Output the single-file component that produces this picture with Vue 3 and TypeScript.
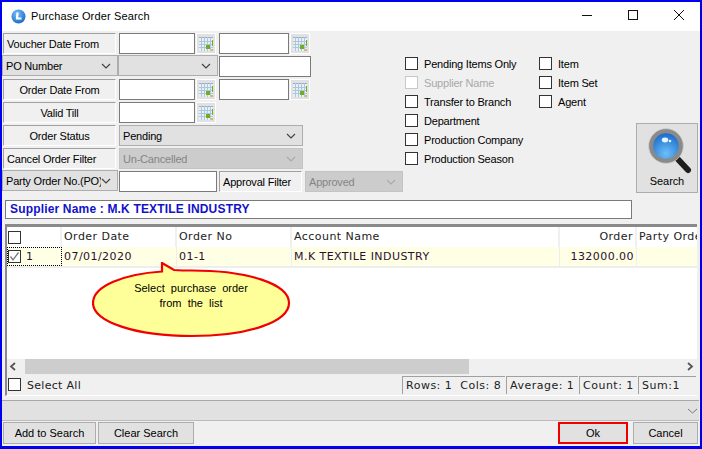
<script setup lang="ts">
const col1 = ['Pending Items Only', 'Supplier Name', 'Transfer to Branch', 'Department', 'Production Company', 'Production Season']
const col2 = ['Item', 'Item Set', 'Agent']
const stats = [
  { text: 'Rows: 1  Cols: 8', w: 103 },
  { text: 'Average: 1', w: 72 },
  { text: 'Count: 1', w: 58 },
  { text: 'Sum:1', w: 58 },
]
</script>

<template>
  <div class="window">
    <header class="titlebar">
      <svg class="app-icon" width="15" height="15" viewBox="0 0 15 15">
        <defs>
          <radialGradient id="ai" cx="0.4" cy="0.3" r="0.8">
            <stop offset="0" stop-color="#7cc0f5" />
            <stop offset="1" stop-color="#0e62c4" />
          </radialGradient>
        </defs>
        <circle cx="7.5" cy="7.5" r="7" fill="url(#ai)" />
        <path d="M6.5 3.5 L6 9.5 L10.5 9.5" fill="none" stroke="#fff" stroke-width="2.2" />
      </svg>
      <span class="title">Purchase Order Search</span>
      <div class="controls">
        <svg width="12" height="12" viewBox="0 0 12 12"><path d="M1 6.5H11" stroke="#111" /></svg>
        <svg width="12" height="12" viewBox="0 0 12 12"><rect x="1.5" y="1.5" width="9" height="9" fill="none" stroke="#111" /></svg>
        <svg width="12" height="12" viewBox="0 0 12 12"><path d="M1 1L11 11M11 1L1 11" stroke="#111" /></svg>
      </div>
    </header>

    <main class="content">
      <section class="top">
        <div class="filters">
          <div class="row">
            <div class="lbl w113 left">Voucher Date From</div>
            <input class="txt w76 ml3" />
            <span class="cal"><svg width="16" height="16" viewBox="0 0 16 16"><rect x="1" y="1" width="14" height="14" fill="#e8eff6" /><path d="M1 1.5H15" stroke="#8fb0cc" /><path d="M1 5.500H15M1 8.500H15M1 11.500H15M3.500 1V15M6.500 1V15M9.500 1V15M12.500 1V15" stroke="#aec6da" /><rect x="8" y="9" width="4" height="4" fill="#6fae1e" /><rect x="14" y="4" width="1" height="6" fill="#6fae1e" /><rect x="13" y="13" width="2" height="2" fill="#eab060" /></svg></span>
            <input class="txt w70 ml3" />
            <span class="cal"><svg width="16" height="16" viewBox="0 0 16 16"><rect x="1" y="1" width="14" height="14" fill="#e8eff6" /><path d="M1 1.5H15" stroke="#8fb0cc" /><path d="M1 5.500H15M1 8.500H15M1 11.500H15M3.500 1V15M6.500 1V15M9.500 1V15M12.500 1V15" stroke="#aec6da" /><rect x="8" y="9" width="4" height="4" fill="#6fae1e" /><rect x="14" y="4" width="1" height="6" fill="#6fae1e" /><rect x="13" y="13" width="2" height="2" fill="#eab060" /></svg></span>
          </div>
          <div class="row tight">
            <div class="sel first"><span>PO Number</span><svg width="10" height="6" viewBox="0 0 10 6"><path d="M1 1L5 5L9 1" fill="none" stroke="#444" stroke-width="1.200" /></svg></div>
            <div class="sel w100"><span></span><svg width="10" height="6" viewBox="0 0 10 6"><path d="M1 1L5 5L9 1" fill="none" stroke="#444" stroke-width="1.200" /></svg></div>
            <input class="txt w92 ml1" />
          </div>
          <div class="row">
            <div class="lbl w113">Order Date From</div>
            <input class="txt w76 ml3" />
            <span class="cal"><svg width="16" height="16" viewBox="0 0 16 16"><rect x="1" y="1" width="14" height="14" fill="#e8eff6" /><path d="M1 1.5H15" stroke="#8fb0cc" /><path d="M1 5.500H15M1 8.500H15M1 11.500H15M3.500 1V15M6.500 1V15M9.500 1V15M12.500 1V15" stroke="#aec6da" /><rect x="8" y="9" width="4" height="4" fill="#6fae1e" /><rect x="14" y="4" width="1" height="6" fill="#6fae1e" /><rect x="13" y="13" width="2" height="2" fill="#eab060" /></svg></span>
            <input class="txt w70 ml3" />
            <span class="cal"><svg width="16" height="16" viewBox="0 0 16 16"><rect x="1" y="1" width="14" height="14" fill="#e8eff6" /><path d="M1 1.5H15" stroke="#8fb0cc" /><path d="M1 5.500H15M1 8.500H15M1 11.500H15M3.500 1V15M6.500 1V15M9.500 1V15M12.500 1V15" stroke="#aec6da" /><rect x="8" y="9" width="4" height="4" fill="#6fae1e" /><rect x="14" y="4" width="1" height="6" fill="#6fae1e" /><rect x="13" y="13" width="2" height="2" fill="#eab060" /></svg></span>
          </div>
          <div class="row">
            <div class="lbl w113">Valid Till</div>
            <input class="txt w76 ml3" />
            <span class="cal"><svg width="16" height="16" viewBox="0 0 16 16"><rect x="1" y="1" width="14" height="14" fill="#e8eff6" /><path d="M1 1.5H15" stroke="#8fb0cc" /><path d="M1 5.500H15M1 8.500H15M1 11.500H15M3.500 1V15M6.500 1V15M9.500 1V15M12.500 1V15" stroke="#aec6da" /><rect x="8" y="9" width="4" height="4" fill="#6fae1e" /><rect x="14" y="4" width="1" height="6" fill="#6fae1e" /><rect x="13" y="13" width="2" height="2" fill="#eab060" /></svg></span>
          </div>
          <div class="row">
            <div class="lbl w113">Order Status</div>
            <div class="sel w184 ml3"><span>Pending</span><svg width="10" height="6" viewBox="0 0 10 6"><path d="M1 1L5 5L9 1" fill="none" stroke="#444" stroke-width="1.200" /></svg></div>
          </div>
          <div class="row">
            <div class="lbl w113 left">Cancel Order Filter</div>
            <div class="sel w184 ml3 off"><span>Un-Cancelled</span><svg width="10" height="6" viewBox="0 0 10 6"><path d="M1 1L5 5L9 1" fill="none" stroke="#aaa" stroke-width="1.200" /></svg></div>
          </div>
          <div class="row">
            <div class="sel first up1"><span class="squeeze">Party Order No.(PO)</span><svg width="10" height="6" viewBox="0 0 10 6"><path d="M1 1L5 5L9 1" fill="none" stroke="#444" stroke-width="1.200" /></svg></div>
            <input class="txt w98 ml1" />
            <div class="lbl w83 ml2 left">Approval Filter</div>
            <div class="sel w98 ml3 off"><span>Approved</span><svg width="10" height="6" viewBox="0 0 10 6"><path d="M1 1L5 5L9 1" fill="none" stroke="#aaa" stroke-width="1.200" /></svg></div>
          </div>
        </div>

        <div class="checks">
          <div class="check-col wide">
            <label v-for="(c, i) in col1" :key="c" class="chk" :class="{ dim: i === 1 }"><i></i>{{ c }}</label>
          </div>
          <div class="check-col">
            <label v-for="c in col2" :key="c" class="chk"><i></i>{{ c }}</label>
          </div>
        </div>

        <button class="search">
          <svg width="46" height="48" viewBox="0 0 46 48">
            <defs>
              <radialGradient id="lens" cx="0.5" cy="0.75" r="0.8">
                <stop offset="0" stop-color="#6cc0fa" />
                <stop offset="1" stop-color="#0b5bc0" />
              </radialGradient>
            </defs>
            <path d="M27 28L41 43" stroke="#1e1e1e" stroke-width="6" stroke-linecap="round" />
            <circle cx="19" cy="19" r="15" fill="url(#lens)" stroke="#8a8a8a" stroke-width="4.500" />
            <circle cx="19" cy="19" r="17.300" fill="none" stroke="#c9c9c9" stroke-width="0.800" />
            <ellipse cx="18" cy="13" rx="3.200" ry="2.400" fill="#e6f5ff" />
            <circle cx="23" cy="14" r="1.300" fill="#e6f5ff" />
          </svg>
          <span>Search</span>
        </button>
      </section>

      <div class="supplier">Supplier Name : M.K TEXTILE INDUSTRY</div>

      <section class="grid">
        <div class="grid-rows">
          <div class="grow head">
            <div class="c c0"><i class="box"></i></div>
            <div class="c c1">Order Date</div>
            <div class="c c2">Order No</div>
            <div class="c c3">Account Name</div>
            <div class="c c4 right">Order</div>
            <div class="c c5">Party Order</div>
          </div>
          <div class="grow data">
            <div class="c c0 focus">
              <i class="box checked"><svg width="11" height="11" viewBox="0 0 11 11"><path d="M1.500 5.500L4 9L9.500 1.500" fill="none" stroke="#777" stroke-width="1.300" /></svg></i>
              <span>1</span>
            </div>
            <div class="c c1">07/01/2020</div>
            <div class="c c2">01-1</div>
            <div class="c c3">M.K TEXTILE INDUSTRY</div>
            <div class="c c4 right">132000.00</div>
            <div class="c c5"></div>
          </div>
          <div class="blank"></div>
        </div>

        <div class="hscroll">
          <svg width="8" height="9" viewBox="0 0 8 9"><path d="M6 1L2 4.500L6 8" fill="none" stroke="#555" stroke-width="1.800" /></svg>
          <div class="track"><div class="thumb"></div></div>
          <svg width="8" height="9" viewBox="0 0 8 9"><path d="M2 1L6 4.500L2 8" fill="none" stroke="#555" stroke-width="1.800" /></svg>
        </div>

        <div class="status">
          <label class="all"><i class="box"></i><span>Select All</span></label>
          <div class="stats">
            <span v-for="s in stats" :key="s.text" class="stat" :style="{ width: s.w + 'px' }">{{ s.text }}</span>
          </div>
        </div>

        <div class="bubble">
          <svg width="200" height="76" viewBox="0 0 200 76">
            <path d="M70 1 L82 8 Q90 8.500 100 8.500 C156 8.500 197 22 197 41 C197 60 156 74 100 74 C44 74 1 60 1 41 C1 24 32 12 70 9.500 Z" fill="#ffff99" stroke="#f00000" stroke-width="2.200" />
          </svg>
          <p>Select&nbsp; purchase&nbsp; order<br />from&nbsp; the&nbsp; list</p>
        </div>
      </section>

      <div class="collapsed">
        <svg width="11" height="6" viewBox="0 0 11 6"><path d="M1 1L5.500 5L10 1" fill="none" stroke="#777" stroke-width="1" /></svg>
      </div>

      <footer class="actions">
        <button class="btn a1">Add to Search</button>
        <button class="btn a2">Clear Search</button>
        <span class="spacer"></span>
        <button class="btn ok">Ok</button>
        <button class="btn cancel">Cancel</button>
      </footer>
    </main>
  </div>
</template>

<style scoped>
.window {
  box-sizing: border-box;
  width: 702px;
  height: 449px;
  border: solid #0000f0;
  border-width: 2px 2px 3px 2px;
  background: #f0f0f0;
  font-family: "Liberation Sans", Arial, sans-serif;
  font-size: 11px;
  letter-spacing: -0.2px;
  color: #000;
  display: flex;
  flex-direction: column;
  overflow: hidden;
}
.titlebar {
  height: 29px;
  background: #fff;
  display: flex;
  align-items: center;
  flex: none;
}
.app-icon { margin-left: 9px; margin-top: -1px; }
.title { margin-left: 5px; margin-top: -1px; letter-spacing: 0.15px; }
.controls {
  margin-left: auto;
  display: flex;
  gap: 34px;
  padding-right: 15px;
  margin-top: -3px;
}
.content { flex: 1; display: flex; flex-direction: column; min-height: 0; }
.top { display: flex; height: 162px; padding-top: 2px; box-sizing: border-box; flex: none; position: relative; }
.filters { width: 403px; padding-left: 1px; display: flex; flex-direction: column; gap: 2px; flex: none; box-sizing: border-box; }
.row { display: flex; height: 21px; align-items: flex-start; }
.row.tight .sel { margin-top: -1px; }
.lbl {
  box-sizing: border-box;
  height: 21px;
  border: solid;
  border-width: 1px;
  border-color: #a0a0a0 #fff #fff #a0a0a0;
  background: #f0f0f0;
  display: flex;
  align-items: center;
  justify-content: center;
  white-space: nowrap;
  overflow: hidden;
}
.lbl.left { justify-content: flex-start; padding-left: 3px; }
.txt {
  box-sizing: border-box;
  height: 21px;
  border: 1px solid #7a7a7a;
  background: #fff;
  padding: 0;
  outline: none;
}
.w113 { width: 113px; }
.w83 { width: 83px; }
.w76 { width: 76px; }
.w70 { width: 70px; }
.w92 { width: 92px; }
.w98 { width: 98px; }
.w100 { width: 100px; }
.w184 { width: 184px; }
input.ml1, .ml1 { margin: 0 0 0 1px; }
.ml2 { margin-left: 2px; }
input.ml3 { margin: 0 0 0 3px; }
.ml3 { margin-left: 3px; }
.cal {
  box-sizing: border-box;
  width: 20px;
  height: 21px;
  background: #e1e1e1;
  border: 1px solid #fff;
  margin-left: 1px;
  display: flex;
  align-items: center;
  justify-content: center;
  flex: none;
}
.sel {
  box-sizing: border-box;
  height: 21px;
  background: #e1e1e1;
  border: 1px solid #adadad;
  display: flex;
  align-items: center;
  justify-content: space-between;
  padding: 0 6px 0 3px;
  white-space: nowrap;
  overflow: hidden;
}
.sel span { overflow: hidden; }
.sel svg { flex: none; }
.sel.first { width: 116px; margin-left: -1px; padding-left: 3px; padding-right: 6px; }
.sel.first span { width: 96px; }
.up1 { margin-top: -1px; }
.off { background: #cccccc; color: #858585; border-color: #c4c4c4; }
.checks { display: flex; padding-top: 24px; margin-left: 0; flex: none; }
.check-col { display: flex; flex-direction: column; gap: 6px; }
.check-col.wide { width: 134px; }
.chk { display: flex; align-items: center; height: 13px; white-space: nowrap; }
.chk i {
  box-sizing: border-box;
  width: 13px;
  height: 13px;
  border: 1px solid #333;
  background: #fff;
  margin-right: 6px;
  flex: none;
}
.chk.dim { color: #a8a8a8; }
.chk.dim i { border-color: #c8c8c8; }
.search {
  position: absolute;
  left: 634px;
  top: 92px;
  box-sizing: border-box;
  width: 62px;
  height: 70px;
  background: #e1e1e1;
  border: 1px solid #adadad;
  font: inherit;
  letter-spacing: -0.1px;
  padding: 3px 0 0 5px;
  display: flex;
  flex-direction: column;
  align-items: center;
}
.search span { margin-top: 0; margin-left: -5px; }
.supplier {
  box-sizing: border-box;
  margin: 7px 0 0 3px;
  width: 627px;
  height: 19px;
  background: #fff;
  border: 1px solid #7a7a7a;
  color: #1212c8;
  font-size: 12px;
  letter-spacing: 0.17px;
  font-weight: bold;
  padding-left: 4px;
  line-height: 17px;
  flex: none;
}
.grid {
  position: relative;
  box-sizing: border-box;
  margin: 5px 3px 0 3px;
  height: 172px;
  border-top: 3px solid #8a8a8a;
  border-left: 2px solid #8a8a8a;
  border-bottom: 1px solid #fff;
  font-family: "DejaVu Sans", Verdana, sans-serif;
  font-size: 11px;
  letter-spacing: 0.45px;
  flex: none;
  display: flex;
  flex-direction: column;
}
.grid-rows { flex: none; height: 132px; background: #fff; display: flex; flex-direction: column; }
.grow { display: flex; height: 20px; flex: none; }
.grow.head { background: #fff; margin-top: 0; }
.grow.data { height: 19px; background: #ffffe6; border-bottom: 2px solid #eeeeee; box-sizing: content-box; }
.blank { flex: 1; }
.c {
  box-sizing: border-box;
  height: 100%;
  display: flex;
  align-items: center;
  padding-left: 2px;
  border-right: 1px solid #eeeeee;
  white-space: nowrap;
  overflow: hidden;
  flex: none;
}
.grow.data .c { color: #2c1030; }
.head .c { color: #222; border-right: 2px solid #f0f0f0; padding-bottom: 2px; }
.c0 { width: 55px; }
.grow .c0 { padding-left: 1px; padding-bottom: 0; }
.c1 { width: 115px; }
.c2 { width: 115px; }
.c3 { width: 268px; }
.c4 { width: 77px; justify-content: flex-end; padding: 0 2px 0 0; }
.c5 { width: 60px; border-right: none; padding-left: 2px; }
.grow .c5 { border-right: none; }
.box {
  box-sizing: border-box;
  display: inline-flex;
  align-items: center;
  justify-content: center;
  width: 13px;
  height: 13px;
  border: 1px solid #333;
  background: #fff;
  flex: none;
}
.focus {
  outline: 1px dotted #000;
  outline-offset: -1px;
  gap: 5px;
  background: #ffffe6;
}
.hscroll {
  flex: none;
  height: 15px;
  display: flex;
  align-items: center;
  padding: 0 3px 0 2px;
  background: #f0f0f0;
}
.track { flex: 1; height: 15px; margin: 0 5px 0 8px; }
.thumb { width: 444px; height: 15px; background: #cdcdcd; }
.status {
  flex: 1;
  display: flex;
  align-items: center;
  justify-content: space-between;
  padding-right: 1px;
}
.all { display: flex; align-items: center; gap: 6px; margin-left: 1px; color: #222; font-size: 11px; letter-spacing: 0.3px; }
.all span { margin-top: 1px; }
.stats { display: flex; height: 18px; gap: 1px; margin-top: 1px; }
.stat {
  box-sizing: border-box;
  border-left: 1px solid #a0a0a0;
  border-top: 1px solid #a0a0a0;
  padding-left: 3px;
  line-height: 17px;
  white-space: pre;
  overflow: hidden;
  font-size: 11px;
  letter-spacing: 0.5px;
  color: #222;
}
.bubble {
  position: absolute;
  left: 85px;
  top: 35px;
  width: 200px;
  height: 76px;
  font-family: "Liberation Sans", Arial, sans-serif;
  font-size: 11px;
  letter-spacing: 0;
}
.bubble svg { position: absolute; left: 0; top: 0; }
.bubble p {
  position: absolute;
  left: 0;
  top: 19px;
  width: 198px;
  margin: 0;
  line-height: 15px;
  text-align: center;
}
.collapsed {
  box-sizing: border-box;
  margin: 4px 1px 0 0;
  height: 21px;
  background: #e1e1e1;
  border-top: 1px solid #a8a8a8;
  border-bottom: 1px solid #bbb;
  flex: none;
  display: flex;
  align-items: center;
  justify-content: flex-end;
  padding-right: 1px;
}
.actions { flex: none; display: flex; margin-top: 1px; padding: 0 2px 0 1px; height: 23px; gap: 2px; }
.spacer { flex: 1; }
.btn {
  box-sizing: border-box;
  height: 22px;
  background: #e1e1e1;
  border: 1px solid #adadad;
  font: inherit;
  color: #000;
  padding: 0;
}
.a1 { width: 93px; }
.a2 { width: 96px; }
.ok { width: 70px; border: 2px solid #f00000; margin-right: 3px; }
.cancel { width: 65px; }
</style>
